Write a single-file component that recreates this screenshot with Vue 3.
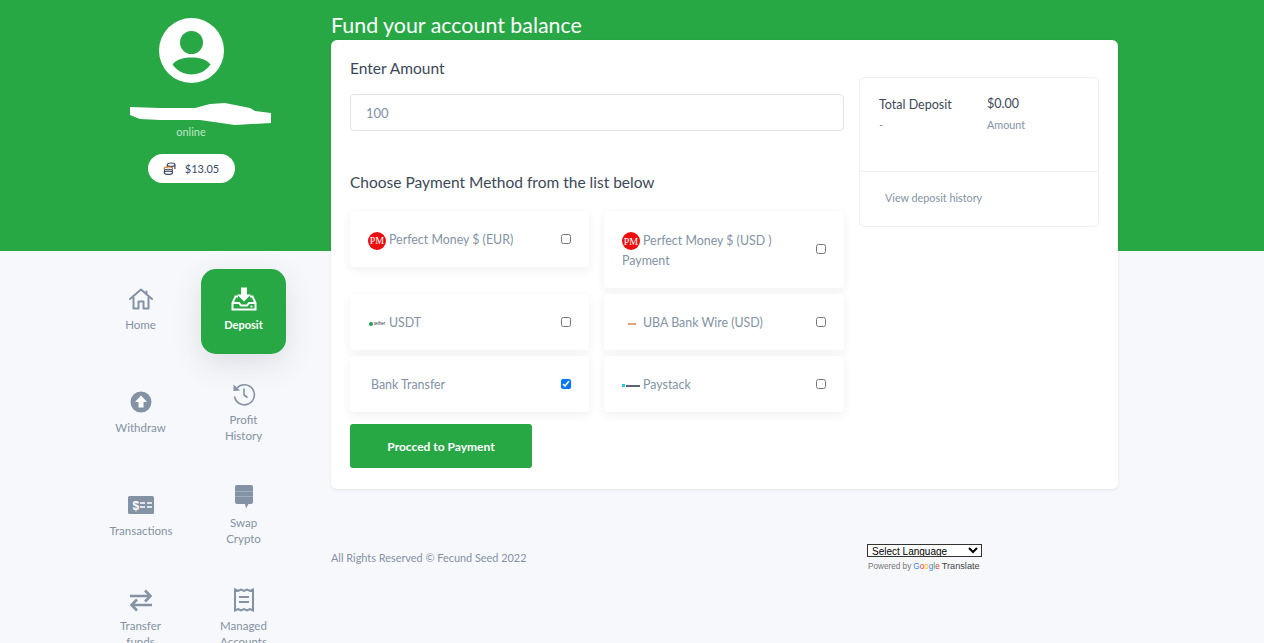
<template>
  <div class="pagina">
    <aside class="lateral">
      <div class="perfil">
        <svg class="avatar" viewBox="0 0 65 65">
          <circle cx="32.5" cy="32.5" r="32.5" fill="#fff" />
          <circle cx="32.5" cy="24.5" r="11.5" fill="#28a745" />
          <path d="M13.5 46.5C18 41 25 39.5 32.5 39.5S47 41 51.5 46.5C47 53 40 56.5 32.5 56.5S18 53 13.5 46.500Z" fill="#28a745" />
        </svg>
        <svg class="risco" viewBox="0 0 141 23">
          <path d="M0 4L30 5L65 5L80 1L95 0L120 5L125 8L141 10V20L105 22L70 17L30 17L10 16L0 12Z" fill="#fff" />
        </svg>
        <span class="online">online</span>
        <div class="saldo">
          <svg width="13" height="13" viewBox="0 0 12 12" fill="none" stroke="#3a4a6b" stroke-width="1.1">
            <ellipse cx="7.5" cy="2.5" rx="3.5" ry="1.6" />
            <path d="M4 3v3M11 2.5v4" />
            <ellipse cx="5" cy="6" rx="3.8" ry="1.5" fill="#fff" stroke="#c9772f" />
            <ellipse cx="5" cy="8.2" rx="3.8" ry="1.5" fill="#fff" />
            <ellipse cx="5" cy="10" rx="3.8" ry="1.5" fill="#fff" />
          </svg>
          <span>$13.05</span>
        </div>
      </div>

      <nav class="menu">
        <a v-for="item in menu" :key="item.nome" class="menu-item" :class="{ ativo: item.ativo }">
          <svg class="menu-icone" viewBox="0 0 26 26" v-html="item.icone"></svg>
          <span>{{ item.nome }}</span>
        </a>
      </nav>
    </aside>

    <main class="conteudo">
      <h1>Fund your account balance</h1>
      <section class="cartao">
        <div class="formulario">
          <label for="valor">Enter Amount</label>
          <input id="valor" type="text" placeholder="100" />

          <h2>Choose Payment Method from the list below</h2>
          <div class="metodos">
            <label v-for="metodo in metodos" :key="metodo.nome" class="metodo">
              <span class="metodo-nome">
                <span v-if="metodo.logo === 'pm'" class="logo logo-pm">PM</span>
                <span v-else-if="metodo.logo === 'tether'" class="logo logo-mini"><i class="ponto-tether"></i>tether</span>
                <span v-else-if="metodo.logo === 'uba'" class="logo logo-mini"><i class="traco-uba"></i></span>
                <span v-else-if="metodo.logo === 'paystack'" class="logo logo-mini"><i class="ponto-pay"></i><i class="traco-pay"></i></span>
                <span :class="{ recuo: !metodo.logo }">{{ metodo.nome }}</span>
              </span>
              <input type="checkbox" :checked="metodo.marcado" />
            </label>
          </div>

          <button type="button">Procced to Payment</button>
        </div>

        <div class="resumo">
          <div class="resumo-topo">
            <div>
              <h3>Total Deposit</h3>
              <p>-</p>
            </div>
            <div>
              <strong>$0.00</strong>
              <p class="rotulo">Amount</p>
            </div>
          </div>
          <a class="historico">View deposit history</a>
        </div>
      </section>

      <footer class="rodape">
        <span>All Rights Reserved © Fecund Seed 2022</span>
        <div class="tradutor">
          <select>
            <option>Select Language</option>
          </select>
          <div class="powered">
            <span>Powered by</span>
            <span class="google"><b class="az">G</b><b class="vm">o</b><b class="am">o</b><b class="az">g</b><b class="vd">l</b><b class="vm">e</b></span>
            <em>Translate</em>
          </div>
        </div>
      </footer>
    </main>
  </div>
</template>

<script setup>
const menu = [
  {
    nome: 'Home',
    icone: '<path d="M2 13L13 3.5L24 13M18.5 5.5V8.5M5.5 11V22.5H10.5V15.5H15.5V22.5H20.5V11" fill="none" stroke="currentColor" stroke-width="2" stroke-linejoin="round" stroke-linecap="round"/>'
  },
  {
    nome: 'Deposit',
    ativo: true,
    icone: '<path d="M10 1.500H16V8.500H20L13 15.500L6 8.500H10Z" fill="currentColor"/><path d="M7 10.500H4.500L1.500 17V23.500H24.500V17L21.500 10.500H19M1.500 17H8L10 19.500H16L18 17H24.500" fill="none" stroke="currentColor" stroke-width="2"/><circle cx="20.500" cy="20.500" r="1.100" fill="currentColor"/>'
  },
  {
    nome: 'Withdraw',
    icone: '<circle cx="13" cy="13" r="10.500" fill="currentColor"/><path d="M13 6.500L19 13H15.500V18.500H10.500V13H7Z" fill="#fff"/>'
  },
  {
    nome: 'Profit History',
    icone: '<path d="M6 7A10 10 0 1 1 3.500 15.500" fill="none" stroke="currentColor" stroke-width="1.600"/><path d="M2.500 3.500L9 9.500L2.500 10Z" fill="currentColor"/><path d="M13 7.500V14L16.500 16.500" fill="none" stroke="currentColor" stroke-width="1.600"/>'
  },
  {
    nome: 'Transactions',
    icone: '<rect x="0" y="4" width="26" height="18" rx="1.500" fill="currentColor"/><text x="4.500" y="17.500" font-size="12" font-weight="700" font-family="Liberation Sans, sans-serif" fill="#fff">$</text><path d="M12 11H17M19 11H24M12 15H17M19 15H24" stroke="#fff" stroke-width="1.600"/>'
  },
  {
    nome: 'Swap Crypto',
    icone: '<path d="M6 1H20Q22 1 22 3V18Q22 20 20 20H17.500L15 24.500L14 20H6Q4 20 4 18V3Q4 1 6 1Z" fill="currentColor"/><path d="M4 7.500H22M4 12.500H22" stroke="#a9b3c4" stroke-width=".8"/>'
  },
  {
    nome: 'Transfer funds',
    icone: '<path d="M2 9H21M17 3.500L22.500 9L17 14.500M24 18H5M9 12.500L3.500 18L9 23.500" fill="none" stroke="currentColor" stroke-width="2.600"/>'
  },
  {
    nome: 'Managed Accounts',
    icone: '<path d="M4 2.500L7 4L10 2.500L13 4L16 2.500L19 4L22 2.500V23.500L19 22L16 23.500L13 22L10 23.500L7 22L4 23.500Z" fill="none" stroke="currentColor" stroke-width="2"/><path d="M8 10H18M8 15H18" stroke="currentColor" stroke-width="2"/>'
  }
]

const metodos = [
  { nome: 'Perfect Money $ (EUR)', logo: 'pm' },
  { nome: 'Perfect Money $ (USD ) Payment', logo: 'pm' },
  { nome: 'USDT', logo: 'tether' },
  { nome: 'UBA Bank Wire (USD)', logo: 'uba' },
  { nome: 'Bank Transfer', logo: '', marcado: true },
  { nome: 'Paystack', logo: 'paystack' }
]
</script>

<style>
html, body {
  margin: 0;
  overflow: hidden;
}
</style>

<style scoped>
.pagina {
  display: flex;
  height: 100vh;
  overflow: hidden;
  background: linear-gradient(#28a745 251px, #f7f8fb 251px);
  font-family: Lato, "Open Sans", sans-serif;
  color: #8392a5;
}

.lateral {
  width: 331px;
  flex-shrink: 0;
  padding-left: 89px;
  box-sizing: border-box;
}

.perfil {
  width: 206px;
  height: 269px;
  margin-left: -1px;
  padding-top: 18px;
  box-sizing: border-box;
  display: flex;
  flex-direction: column;
  align-items: center;
}

.avatar {
  width: 65px;
  height: 65px;
}

.risco {
  width: 141px;
  height: 23px;
  margin: 20px 0 0 18px;
  display: block;
}

.online {
  margin-top: -1px;
  font-size: 11px;
  line-height: 14px;
  color: #bfe6c8;
}

.saldo {
  margin-top: 15px;
  width: 87px;
  height: 29px;
  background: #fff;
  border-radius: 15px;
  display: flex;
  align-items: center;
  justify-content: center;
  gap: 9px;
  font-size: 11px;
  color: #3a4a6b;
}

.menu {
  display: grid;
  grid-template-columns: 85px 85px;
  grid-auto-rows: 85px;
  gap: 18px;
  margin-left: 9px;
}

.menu-item {
  display: flex;
  flex-direction: column;
  align-items: center;
  justify-content: center;
  gap: 5px;
  padding-bottom: 4px;
  box-sizing: border-box;
  font-size: 11.5px;
  line-height: 16px;
  text-align: center;
  color: #8392a5;
  border-radius: 15px;
}

.menu-item span {
  width: 62px;
}

.menu-item.ativo {
  background: #28a745;
  color: #fff;
  font-size: 11px;
  box-shadow: 0 10px 30px rgba(60, 70, 90, 0.14);
}

.menu-item.ativo span {
  font-weight: 700;
}

.menu-icone {
  width: 26px;
  height: 26px;
  flex-shrink: 0;
}

.conteudo {
  width: 787px;
}

h1 {
  margin: 0;
  height: 40px;
  padding-top: 12px;
  box-sizing: border-box;
  font-size: 21.4px;
  line-height: 27px;
  font-weight: 400;
  color: #fff;
  white-space: nowrap;
}

.cartao {
  display: flex;
  align-items: flex-start;
  gap: 15px;
  height: 449px;
  box-sizing: border-box;
  padding: 19px 19px 0;
  background: #fff;
  border-radius: 6px;
  box-shadow: 0 1px 3px rgba(50, 60, 90, 0.1);
}

.formulario {
  width: 494px;
  flex-shrink: 0;
}

.formulario > label {
  display: block;
  font-size: 15.5px;
  line-height: 18px;
  color: #3c4858;
}

#valor {
  display: block;
  width: 100%;
  height: 37px;
  margin-top: 17px;
  box-sizing: border-box;
  padding: 0 15px;
  border: 1px solid #dfe4ee;
  border-radius: 4px;
  outline: none;
  font: 13px Lato, sans-serif;
  color: #3c4858;
}

#valor::placeholder {
  color: #8392a5;
}

h2 {
  margin: 42px 0 20px;
  font-size: 15.5px;
  line-height: 18px;
  font-weight: 400;
  color: #3c4858;
}

.metodos {
  display: grid;
  grid-template-columns: 239px 240px;
  grid-template-rows: 77px 56px 56px;
  column-gap: 15px;
  row-gap: 6px;
  align-items: start;
}

.metodo {
  display: flex;
  align-items: center;
  justify-content: space-between;
  gap: 10px;
  padding: 19px 18px 17px;
  min-height: 56px;
  box-sizing: border-box;
  background: #fff;
  border-radius: 4px;
  box-shadow: 0 3px 10px rgba(50, 60, 90, 0.07);
  font-size: 12.4px;
  line-height: 20px;
}

.metodo:nth-child(2) {
  height: 77px;
}

.metodo input {
  margin: -3px 0 0;
  width: 10px;
  height: 10px;
  flex-shrink: 0;
}

.logo {
  display: inline-flex;
  align-items: center;
  vertical-align: middle;
  justify-content: center;
  margin-right: 3px;
}

.logo-pm {
  width: 18px;
  height: 18px;
  border-radius: 50%;
  background: #ec0e0e;
  color: #fff;
  font: 10px "Liberation Serif", serif;
}

.logo-mini {
  width: 18px;
  height: 18px;
  font: 4.5px "Liberation Sans", sans-serif;
  color: #334;
  gap: 1px;
}

.ponto-tether {
  width: 4px;
  height: 4px;
  border-radius: 50%;
  background: #1f9d55;
}

.traco-uba {
  width: 8px;
  height: 2px;
  margin-left: 2px;
  background: #e8a080;
}

.ponto-pay {
  width: 3px;
  height: 3px;
  background: #2bc4dc;
}

.traco-pay {
  width: 15px;
  height: 2px;
  background: #5a6470;
}

.recuo {
  margin-left: 3px;
}

button {
  display: block;
  width: 182px;
  height: 44px;
  margin-top: 12px;
  border: none;
  border-radius: 3px;
  background: #28a745;
  color: #fff;
  font: 700 12px Lato, sans-serif;
}

.resumo {
  width: 240px;
  height: 150px;
  margin-top: 18px;
  box-sizing: border-box;
  background: #fff;
  border: 1px solid #edf0f5;
  border-radius: 6px;
  flex-shrink: 0;
}

.resumo-topo {
  display: flex;
  height: 94px;
  box-sizing: border-box;
  padding: 18px 19px 0;
  border-bottom: 1px solid #edf0f5;
  gap: 34px;
}

.resumo-topo > div:first-child {
  width: 74px;
}

h3 {
  margin: 1px 0 0;
  font-size: 12.5px;
  line-height: 16px;
  font-weight: 400;
  color: #3c4858;
  white-space: nowrap;
}

.resumo p {
  margin: 4px 0 0;
  font-size: 11px;
  line-height: 16px;
}

.resumo strong {
  display: block;
  font-size: 12.5px;
  line-height: 16px;
  font-weight: 400;
  color: #3c4858;
}

.resumo .rotulo {
  margin-top: 5px;
  font-size: 10.8px;
}

.historico {
  display: block;
  padding: 19px 25px;
  font-size: 10.8px;
  line-height: 14px;
}

.rodape {
  display: flex;
  justify-content: space-between;
  padding-top: 54px;
  padding-right: 136px;
  font-size: 10.9px;
  line-height: 30px;
}

.tradutor {
  width: 115px;
  font-family: "Liberation Sans", sans-serif;
  font-size: 8.2px;
  color: #777;
  line-height: 13px;
  padding-top: 1px;
}

.tradutor select {
  display: block;
  width: 115px;
  height: 13px;
  padding: 0;
  font: 10px "Liberation Sans", sans-serif;
  border: 1px solid #333;
  background: #fff;
  color: #000;
}

.powered {
  display: flex;
  gap: 2px;
  margin-top: 3px;
  padding-left: 1px;
  white-space: nowrap;
}

.powered em {
  font-style: normal;
  color: #444;
  font-size: 9.2px;
}

.google b {
  font-weight: 400;
}

.az { color: #4285f4; }
.vm { color: #ea4335; }
.am { color: #fbbc05; }
.vd { color: #34a853; }
</style>
